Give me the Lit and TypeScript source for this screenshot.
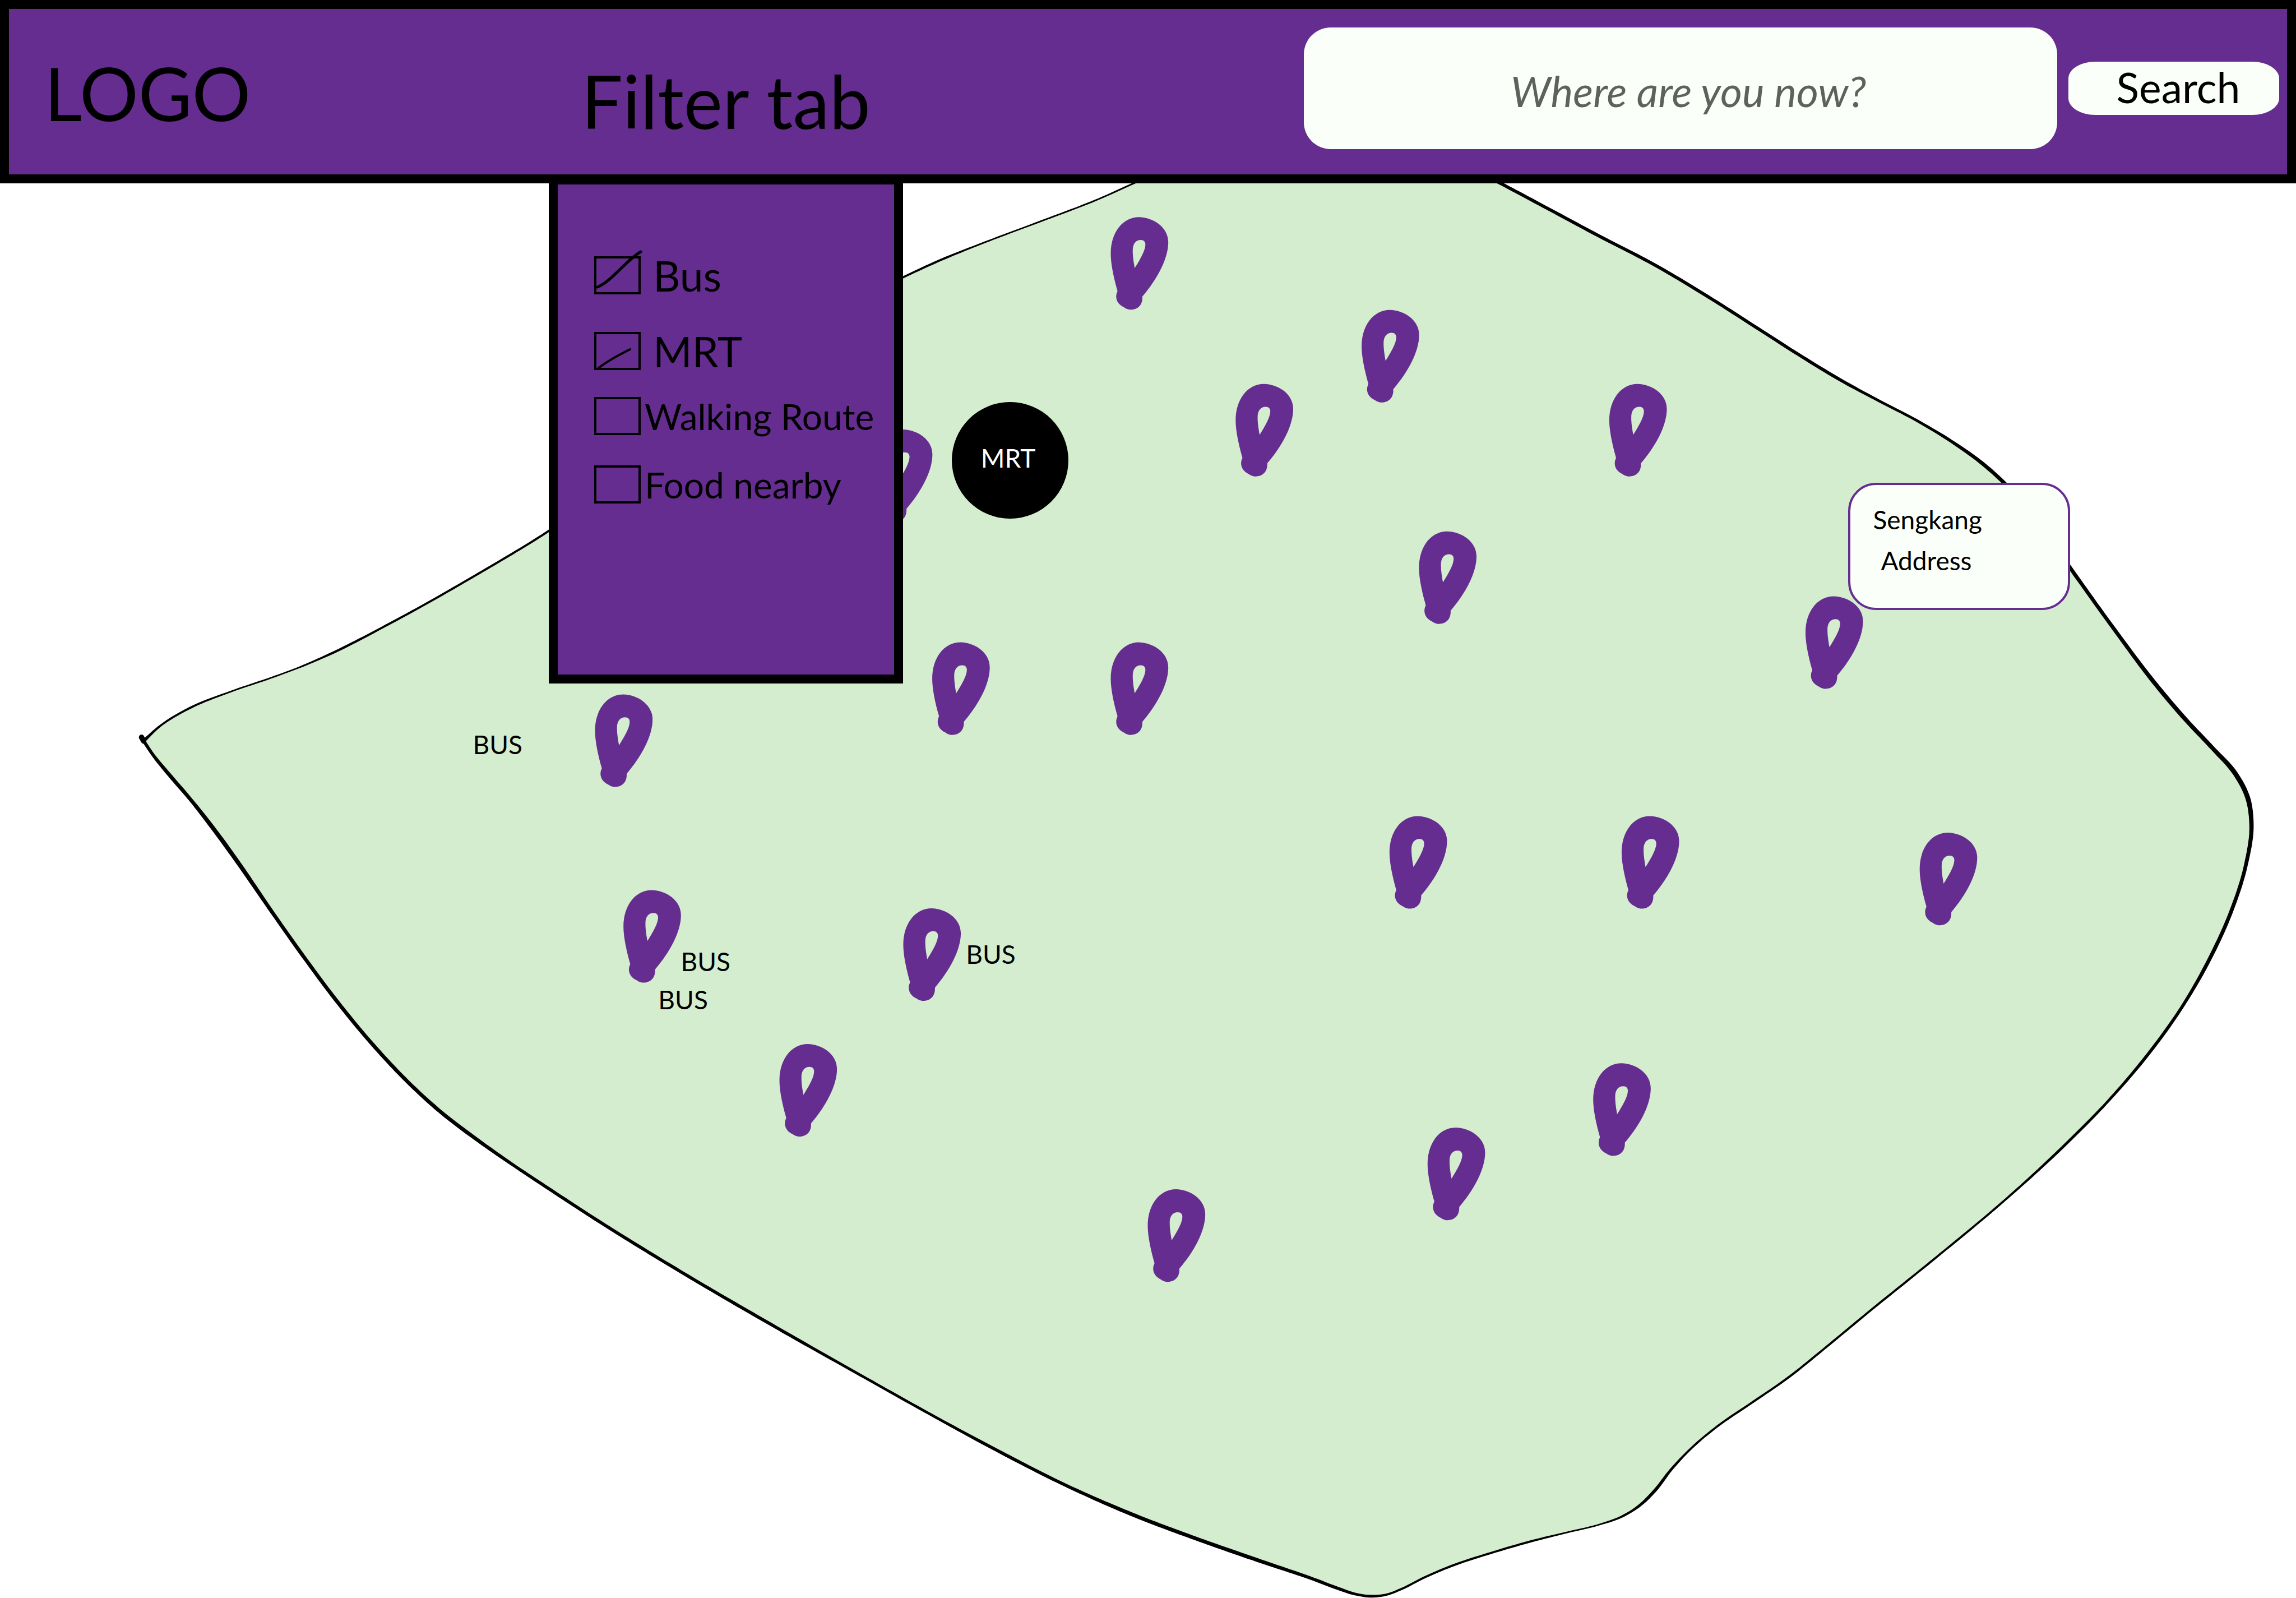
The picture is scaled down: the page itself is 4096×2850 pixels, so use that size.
import { LitElement, html, svg, css } from "lit";
import { customElement, state } from "lit/decorators.js";
import { styleMap } from "lit/directives/style-map.js";

/* Map units: the island canvas is 4283 wide, its visible part starts at y = 342. */
const MAP_W = 4283;
const MAP_TOP = 342;
const MAP_H = 2638;

type Knot = [x: number, y: number, width: number];
type Point = [x: number, y: number];

/* Coastline knots, clockwise from the western tip; width is the pen width. */
const COAST: Knot[] = [
  [268, 1382, 6], [296, 1356, 4], [353, 1321, 4], [430, 1290, 3], [506, 1264, 3],
  [560, 1244, 3], [600, 1227, 4], [740, 1156, 4], [887, 1073, 4], [1024, 990, 4],
  [1240, 830, 4], [1480, 635, 4], [1600, 560, 4], [1685, 517, 4], [1757, 484, 4], [1837, 452, 3],
  [1938, 414, 3], [2050, 371, 3], [2117, 341, 3], [2280, 270, 4], [2460, 230, 5], [2620, 255, 6],
  [2799, 342, 6], [2878, 384, 6], [2975, 436, 6], [3090, 496, 6], [3200, 562, 6], [3289, 619, 6],
  [3361, 665, 6], [3432, 708, 6], [3504, 747, 5], [3575, 784, 5], [3646, 827, 6],
  [3700, 866, 7], [3739, 901, 7], [3800, 972, 7], [3861, 1058, 7], [3945, 1175, 7],
  [4021, 1276, 8], [4078, 1343, 8], [4128, 1396, 8], [4170, 1443, 9], [4193, 1488, 9],
  [4200, 1539, 8], [4190, 1611, 7], [4162, 1700, 7], [4121, 1790, 7], [4071, 1877, 6],
  [4008, 1965, 6], [3933, 2053, 5], [3845, 2142, 5], [3739, 2239, 4], [3613, 2344, 4],
  [3488, 2445, 4], [3402, 2516, 4], [3340, 2566, 4], [3268, 2616, 4], [3205, 2659, 4],
  [3157, 2699, 4], [3118, 2740, 5], [3086, 2781, 6], [3057, 2809, 5], [3024, 2829, 4],
  [2981, 2844, 3], [2927, 2857, 3], [2858, 2874, 4], [2782, 2896, 4], [2709, 2920, 4],
  [2659, 2941, 4], [2613, 2964, 4], [2590, 2973, 4], [2562, 2977, 5], [2533, 2974, 5],
  [2495, 2962, 6], [2450, 2945, 6], [2353, 2912, 7], [2230, 2869, 7],
  [2111, 2824, 7], [1986, 2769, 6], [1862, 2706, 6], [1738, 2639, 5], [1613, 2569, 5],
  [1447, 2475, 6], [1282, 2379, 6], [1116, 2277, 6], [1030, 2221, 6], [946, 2165, 6],
  [881, 2119, 7], [820, 2072, 7], [762, 2019, 7], [697, 1950, 7], [629, 1868, 7], [567, 1785, 7],
  [502, 1693, 7], [445, 1610, 8], [397, 1544, 8], [357, 1493, 7], [315, 1444, 7], [287, 1410, 6],
  [268, 1382, 6],
];

/* Top-left corner of each pin. */
const PINS: Point[] = [
  [2072, 405], [2540, 578], [2305, 716], [3002, 716], [2647, 991], [3368, 1112],
  [1739, 1198], [2072, 1198], [1110, 1295], [1163, 1660], [1685, 1694], [2592, 1522],
  [3025, 1522], [3581, 1553], [1454, 1947], [2972, 1983], [2663, 2103], [2141, 2218],
  [1632, 801],
];

const BUS_STOPS: Point[] = [[882, 1365], [1270, 1769], [1228, 1840], [1802, 1756]];

const PIN_PATH =
  "M38 414 C18 344 0 264 0 204 C0 84 68 0 158 0 C238 2 322 56 322 140 C322 235 258 350 177 444 C180 488 154 518 111 518 C94 518 82 510 71 503 C36 486 20 450 38 414 Z " +
  "M134 285 C125 234 123 212 123 186 C123 149 141 128 168 128 C185 128 194 138 194 154 C193 189 163 239 134 285 Z";

/* Hermite spline over the knots, parametrised by chord length. */
function smooth(knots: Knot[]): Knot[] {
  const last = knots.length - 1;
  const chord = (i: number) =>
    Math.hypot(knots[i + 1][0] - knots[i][0], knots[i + 1][1] - knots[i][1]) || 1;
  const slope = (i: number, k: 0 | 1 | 2): number => {
    const after = i < last ? (knots[i + 1][k] - knots[i][k]) / chord(i) : 0;
    const before = i > 0 ? (knots[i][k] - knots[i - 1][k]) / chord(i - 1) : after;
    if (i === 0) return after;
    if (i === last) return before;
    const h0 = chord(i - 1);
    const h1 = chord(i);
    return (before * h1 + after * h0) / (h0 + h1);
  };
  const out: Knot[] = [];
  for (let i = 0; i < last; i++) {
    const h = chord(i);
    const steps = Math.max(4, Math.round(h / 8));
    for (let s = 0; s < steps; s++) {
      const t = s / steps;
      const t2 = t * t;
      const t3 = t2 * t;
      const at = (k: 0 | 1 | 2) =>
        (2 * t3 - 3 * t2 + 1) * knots[i][k] +
        (t3 - 2 * t2 + t) * h * slope(i, k) +
        (3 * t2 - 2 * t3) * knots[i + 1][k] +
        (t3 - t2) * h * slope(i + 1, k);
      out.push([at(0), at(1), at(2)]);
    }
  }
  out.push(knots[last]);
  return out;
}

const toPath = (points: Point[]) =>
  "M" + points.map(([x, y]) => `${x.toFixed(1)} ${y.toFixed(1)}`).join("L") + "Z";

function coastline(line: Knot[]): string {
  const outer: Point[] = [];
  const inner: Point[] = [];
  line.forEach(([x, y, w], i) => {
    const p = line[Math.max(i - 1, 0)];
    const n = line[Math.min(i + 1, line.length - 1)];
    const dx = n[0] - p[0];
    const dy = n[1] - p[1];
    const len = Math.hypot(dx, dy) || 1;
    const ox = (-dy / len) * (w / 2);
    const oy = (dx / len) * (w / 2);
    outer.push([x + ox, y + oy]);
    inner.unshift([x - ox, y - oy]);
  });
  return toPath([...outer, ...inner]);
}

const COAST_LINE = smooth(COAST);
const LAND_PATH = toPath(COAST_LINE.map(([x, y]) => [x, y] as Point));
const COAST_PATH = coastline(COAST_LINE);

const place = (x: number, y: number) =>
  styleMap({
    left: `${((x / MAP_W) * 100).toFixed(3)}%`,
    top: `${(((y - MAP_TOP) / MAP_H) * 100).toFixed(3)}%`,
  });

@customElement("island-map")
export class IslandMap extends LitElement {
  static styles = css`
    :host {
      display: block;
      position: relative;
      aspect-ratio: 4283 / 2638;
      overflow: hidden;
      font-size: 46px;
      line-height: 46px;
    }
    .canvas {
      display: block;
      width: 100%;
      height: 100%;
    }
    .land {
      fill: #d4edcf;
    }
    .coast {
      fill: #000;
    }
    .tip {
      fill: none;
      stroke: #000;
      stroke-width: 10;
      stroke-linecap: round;
    }
    .pin {
      fill: #662d91;
      fill-rule: evenodd;
    }
    .label,
    .station,
    .card {
      position: absolute;
    }
    .station {
      box-sizing: border-box;
      display: grid;
      place-items: center;
      width: 208px;
      height: 208px;
      padding: 0 6px 8px 0;
      border-radius: 50%;
      background: #000;
      color: #fff;
    }
    .card {
      box-sizing: border-box;
      width: 396px;
      min-height: 227px;
      padding: 25px 40px 21px;
      border: 4px solid #662d91;
      border-radius: 50px;
      background: #fafff9;
      line-height: 73px;
    }
    .name,
    .address {
      margin: 0;
    }
    .address {
      padding-left: 14px;
    }
  `;

  render() {
    return html`
      <svg class="canvas" viewBox="0 ${MAP_TOP} ${MAP_W} ${MAP_H}" aria-hidden="true">
        <path class="land" d=${LAND_PATH}></path>
        <path class="coast" d=${COAST_PATH}></path>
        <path class="tip" d="M264 1375 L268 1382"></path>
        ${PINS.map(
          ([x, y]) => svg`<path class="pin" transform="translate(${x} ${y}) scale(0.3333)" d=${PIN_PATH}></path>`
        )}
      </svg>
      ${BUS_STOPS.map(([x, y]) => html`<span class="label" style=${place(x, y)}>BUS</span>`)}
      <span class="station" style=${place(1775, 750)}>MRT</span>
      <article class="card" style=${place(3448, 900)}>
        <p class="name">Sengkang</p>
        <p class="address">Address</p>
      </article>
    `;
  }
}

@customElement("filter-menu")
export class FilterMenu extends LitElement {
  @state() private open = true;

  static styles = css`
    :host {
      display: block;
      position: relative;
      flex: 0 0 632px;
    }
    .toggle {
      display: block;
      width: 100%;
      padding: 98px 0 0 58px;
      border: 0;
      background: none;
      color: #000;
      font: inherit;
      font-size: 131px;
      line-height: 131px;
      text-align: left;
      white-space: nowrap;
    }
    .panel {
      position: absolute;
      z-index: 2;
      top: calc(100% + 2px);
      left: 0;
      box-sizing: border-box;
      width: 100%;
      min-height: 906px;
      margin: 0;
      padding: 128px 0 128px 65px;
      border: 16px solid #000;
      background: #662d91;
      display: grid;
      grid-template-rows: 135px 116px 122px 68px;
      align-content: start;
    }
    .option {
      display: flex;
      align-items: center;
      gap: 7px;
      height: 68px;
      font-size: 64px;
      white-space: nowrap;
    }
    .wide {
      gap: 22px;
      font-size: 75px;
    }
    .tick {
      position: relative;
      flex: none;
      width: 83px;
      height: 68px;
    }
    .box {
      display: block;
      box-sizing: border-box;
      width: 100%;
      height: 100%;
      margin: 0;
      border: 4px solid #000;
      border-radius: 0;
      appearance: none;
    }
    .mark {
      display: none;
      position: absolute;
      top: 0;
      left: 0;
      width: 100%;
      height: 100%;
      overflow: visible;
      pointer-events: none;
      fill: none;
      stroke: #000;
      stroke-linecap: round;
    }
    .box:checked + .mark {
      display: block;
    }
    .bold {
      stroke-width: 5;
    }
    .thin {
      stroke-width: 4;
    }
  `;

  private option(id: string, label: string, checked: boolean, wide: boolean, mark: unknown = "") {
    return html`
      <div class="option ${wide ? "wide" : ""}">
        <span class="tick">
          <input class="box" type="checkbox" id=${id} .checked=${checked} />
          <svg class="mark" viewBox="0 0 83 68" aria-hidden="true">${mark}</svg>
        </span>
        <label for=${id}>${label}</label>
      </div>
    `;
  }

  render() {
    return html`
      <button
        class="toggle"
        type="button"
        aria-expanded=${this.open ? "true" : "false"}
        @click=${() => (this.open = !this.open)}
      >Filter tab</button>
      ${this.open
        ? html`<div class="panel">
            ${this.option("bus", "Bus", true, true, svg`<path class="bold" d="M6 55 C32 44 56 8 83 -8"></path>`)}
            ${this.option("mrt", "MRT", true, true, svg`<path class="thin" d="M7 65 C22 53 44 41 64 31"></path>`)}
            ${this.option("walk", "Walking Route", false, false)}
            ${this.option("food", "Food nearby", false, false)}
          </div>`
        : ""}
    `;
  }
}

@customElement("app-root")
export class AppRoot extends LitElement {
  static styles = css`
    :host {
      display: block;
      background: #fff;
      color: #000;
      font-family: Lato, "Open Sans", "Noto Sans", sans-serif;
    }
    .bar {
      position: relative;
      z-index: 1;
      display: flex;
      border: 16px solid #000;
      background: #662d91;
    }
    .brand {
      flex: 0 1 963px;
      box-sizing: border-box;
      margin: 0;
      padding: 84px 0 0 63px;
      font-size: 131px;
      font-weight: 400;
      line-height: 131px;
    }
    .search {
      flex: 0 1 1754px;
      box-sizing: border-box;
      display: flex;
      align-items: center;
      gap: 20px;
      margin: 0 0 0 auto;
      padding: 33px 14px 45px 0;
    }
    .where,
    .go {
      box-sizing: border-box;
      border: 0;
      background: #fafff9;
      color: #000;
      font: inherit;
      font-size: 75px;
    }
    .where {
      flex: 1 1 0;
      min-width: 0;
      height: 217px;
      padding: 8px 0 0 28px;
      border-radius: 48px;
      font-style: italic;
      text-align: center;
    }
    .where::placeholder {
      color: #5f625b;
      opacity: 1;
    }
    .go {
      flex: none;
      width: 376px;
      height: 95px;
      padding: 0 0 4px 16px;
      border-radius: 48px / 30px;
      line-height: 91px;
    }
  `;

  render() {
    return html`
      <header class="bar">
        <h1 class="brand">LOGO</h1>
        <filter-menu></filter-menu>
        <form class="search" @submit=${(e: Event) => e.preventDefault()}>
          <input class="where" type="text" aria-label="Where are you now?" placeholder="Where are you now?" />
          <button class="go" type="submit">Search</button>
        </form>
      </header>
      <main>
        <island-map></island-map>
      </main>
    `;
  }
}
